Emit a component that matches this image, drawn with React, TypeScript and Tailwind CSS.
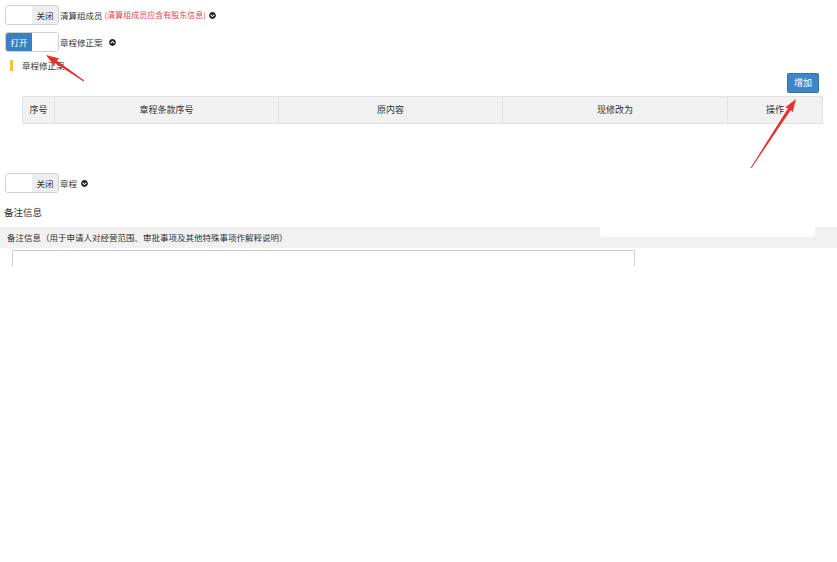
import { FaChevronCircleDown, FaChevronCircleUp } from "react-icons/fa";

const font = { fontFamily: '"Noto Sans CJK SC", "Noto Sans", sans-serif' };

function Toggle({ on }: { on: boolean }) {
  return (
    <div className="flex h-[20px] w-[54px] overflow-hidden rounded-[3px] border border-[#d0d0d0] text-[8.5px]">
      {on ? (
        <>
          <div className="flex w-[27px] items-center justify-center bg-[#3a7fc0] text-white">打开</div>
          <div className="w-[27px] bg-white" />
        </>
      ) : (
        <>
          <div className="w-[27px] bg-white" />
          <div className="flex w-[27px] items-center justify-center bg-[#ededed] text-[#333]">关闭</div>
        </>
      )}
    </div>
  );
}

function arrowPoints(x1: number, y1: number, x2: number, y2: number) {
  const len = Math.hypot(x2 - x1, y2 - y1);
  const dx = (x2 - x1) / len;
  const dy = (y2 - y1) / len;
  const nx = -dy;
  const ny = dx;
  const head = 12;
  const mx = x2 - dx * head;
  const my = y2 - dy * head;
  const p = (x: number, y: number) => `${x.toFixed(1)},${y.toFixed(1)}`;
  return [
    p(x1 + nx * 0.5, y1 + ny * 0.5),
    p(mx + nx * 1.6, my + ny * 1.6),
    p(mx - dx * 1 + nx * 4.5, my - dy * 1 + ny * 4.5),
    p(x2, y2),
    p(mx - dx * 1 - nx * 4.5, my - dy * 1 - ny * 4.5),
    p(mx - nx * 1.6, my - ny * 1.6),
    p(x1 - nx * 0.5, y1 - ny * 0.5),
  ].join(" ");
}

export default function App() {
  const cols = [
    { label: "序号", w: "w-[31px]" },
    { label: "章程条款序号", w: "w-[224px]" },
    { label: "原内容", w: "w-[224px]" },
    { label: "现修改为", w: "w-[225px]" },
    { label: "操作", w: "flex-1" },
  ];

  return (
    <div className="relative h-[562px] w-[837px] overflow-hidden bg-white text-[9px] text-[#333]" style={font}>
      <div className="flex items-center gap-[1px] pl-[5px] pt-[5px]">
        <Toggle on={false} />
        <span className="text-[8.5px]">清算组成员</span>
        <span className="ml-[1px] text-[8px] text-[#e0474c]">(清算组成员应含有股东信息)</span>
        <FaChevronCircleDown className="ml-[2px] h-[7px] w-[7px] text-[#222]" />
      </div>

      <div className="mt-[7px] flex items-center gap-[1px] pl-[5px]">
        <Toggle on={true} />
        <span className="text-[8.5px]">章程修正案</span>
        <FaChevronCircleUp className="ml-[5px] h-[7px] w-[7px] text-[#222]" />
      </div>

      <div className="mt-[8px] flex h-[11px] items-center pl-[10px]">
        <div className="h-[11px] w-[3px] bg-[#f0c43a]" />
        <span className="ml-[9px] text-[8.5px] leading-[11px]">章程修正案</span>
      </div>

      <div className="mt-[2px] flex justify-end pr-[18px]">
        <button className="h-[20px] w-[32px] rounded-[2px] border border-dotted border-[#2a5f91] bg-[#3f86c6] text-[9px] text-white">
          增加
        </button>
      </div>

      <div className="ml-[22px] mt-[3px] flex h-[28px] w-[801px] border border-[#e2e2e2] bg-[#f1f1f1]">
        {cols.map((c, i) => (
          <div
            key={c.label}
            className={`${c.w} flex items-center justify-center ${i > 0 ? "border-l border-[#e4e4e4]" : ""}`}
          >
            {c.label}
          </div>
        ))}
      </div>

      <div className="mt-[49px] flex items-center gap-[1px] pl-[5px]">
        <Toggle on={false} />
        <span className="text-[8.5px]">章程</span>
        <FaChevronCircleDown className="ml-[3px] h-[7px] w-[7px] text-[#222]" />
      </div>

      <div className="mt-[12px] pl-[4px] text-[9.5px] text-[#333]">备注信息</div>

      <div className="mt-[8px] flex h-[21px] items-center bg-[#f1f1f1] pl-[7px] text-[8.5px]">
        备注信息（用于申请人对经营范围、审批事项及其他特殊事项作解释说明）
      </div>

      <div className="ml-[12px] mt-[2px] h-[16px] w-[623px] rounded-t-[2px] border-x border-t border-[#cfcfcf] bg-white" />

      <div className="absolute left-[600px] top-[215px] h-[22px] w-[215px] rounded-[3px] bg-white" />

      <svg className="pointer-events-none absolute inset-0" width="837" height="562">
        <polygon points={arrowPoints(84, 81, 46, 55)} fill="#e5322c" />
        <polygon points={arrowPoints(751, 168, 796, 99)} fill="#e5322c" />
      </svg>
    </div>
  );
}
